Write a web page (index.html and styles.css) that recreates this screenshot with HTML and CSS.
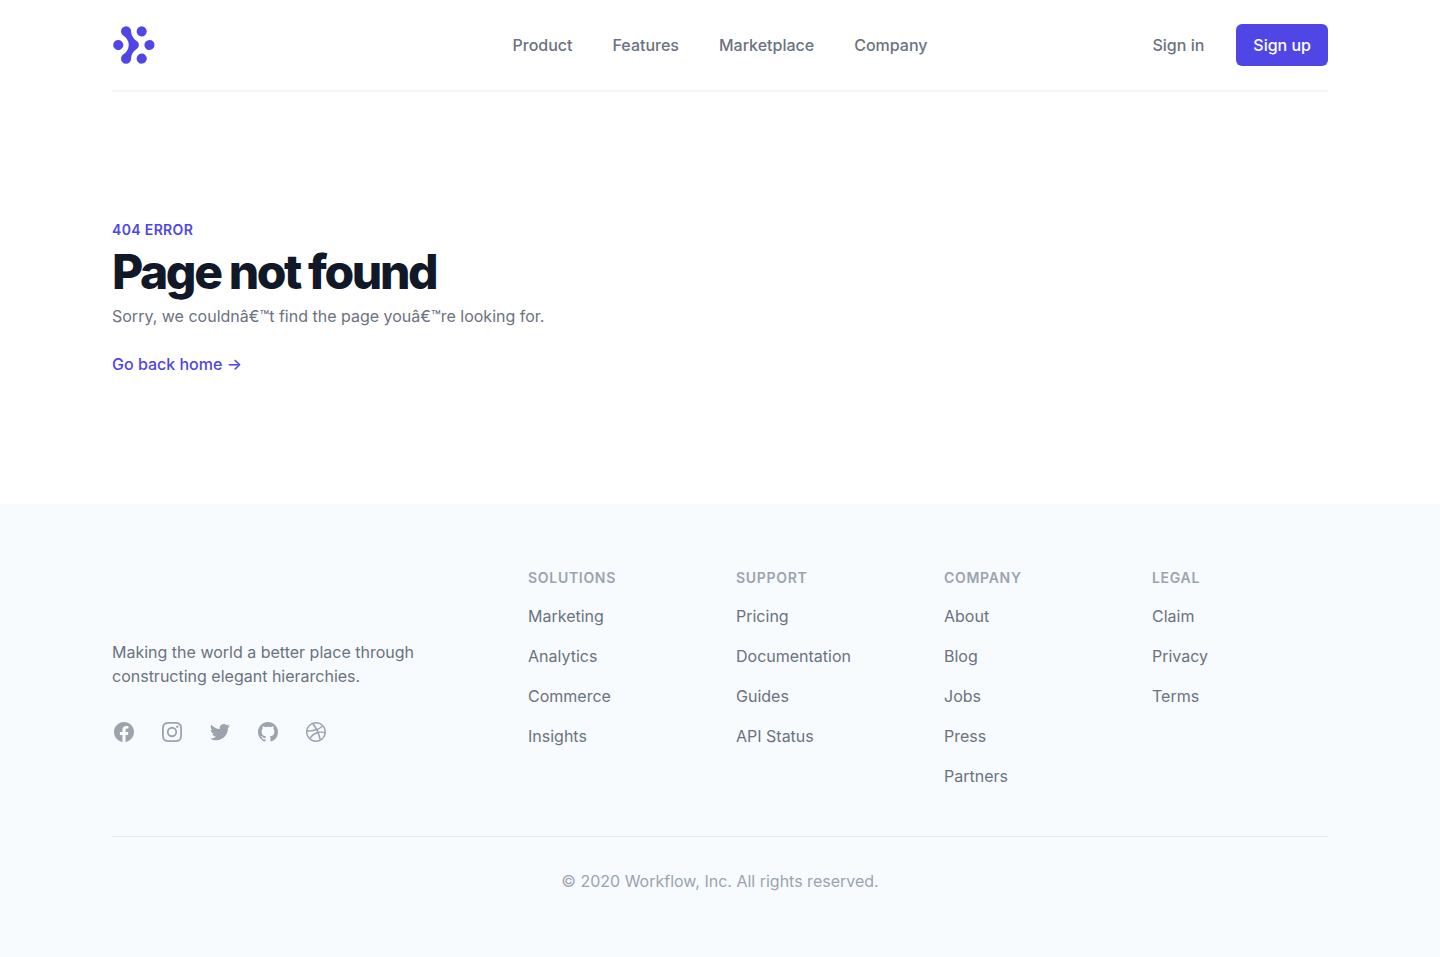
FILE: index.html
```html
<!DOCTYPE html>
<html lang="en">
<head>
<meta charset="utf-8">
<meta name="viewport" content="width=device-width, initial-scale=1">
<title>Page not found</title>
<link rel="stylesheet" href="styles.css">
</head>
<body>
<div class="container">
  <header class="header">
    <a class="logo" href="#" aria-label="Workflow">
      <svg class="logo-mark" viewBox="0 0 35 32" fill="currentColor" aria-hidden="true"><path d="M15.258 26.865a4.043 4.043 0 01-1.133 2.917A4.006 4.006 0 0111.253 31a3.992 3.992 0 01-2.872-1.218 4.028 4.028 0 01-1.133-2.917c.009-.698.2-1.382.557-1.981.356-.6.863-1.094 1.47-1.433-.024.109.09-.055 0 0l1.86-1.652a8.495 8.495 0 002.304-5.793c0-2.926-1.711-5.901-4.17-7.457.094.055-.036-.094 0 0A3.952 3.952 0 017.8 7.116a3.975 3.975 0 01-.557-1.98 4.042 4.042 0 011.133-2.918A4.006 4.006 0 0111.247 1a3.99 3.99 0 012.872 1.218 4.025 4.025 0 011.133 2.917 8.521 8.521 0 002.347 5.832l.817.8c.326.285.668.551 1.024.798.621.33 1.142.826 1.504 1.431a3.902 3.902 0 01-1.504 5.442c.033-.067-.063.036 0 0a8.968 8.968 0 00-3.024 3.183 9.016 9.016 0 00-1.158 4.244zM19.741 5.123c0 .796.235 1.575.676 2.237a4.01 4.01 0 001.798 1.482 3.99 3.99 0 004.366-.873 4.042 4.042 0 00.869-4.386 4.02 4.02 0 00-1.476-1.806 3.994 3.994 0 00-5.058.501 4.038 4.038 0 00-1.175 2.845zM23.748 22.84c-.792 0-1.567.236-2.226.678a4.021 4.021 0 00-1.476 1.806 4.042 4.042 0 00.869 4.387 3.99 3.99 0 004.366.873A4.01 4.01 0 0027.08 29.1a4.039 4.039 0 00-.5-5.082 4 4 0 00-2.832-1.18zM34 15.994c0-.796-.235-1.574-.675-2.236a4.01 4.01 0 00-1.798-1.483 3.99 3.99 0 00-4.367.873 4.042 4.042 0 00-.869 4.387 4.02 4.02 0 001.476 1.806 3.993 3.993 0 002.226.678 4.003 4.003 0 002.832-1.18A4.04 4.04 0 0034 15.993zM5.007 11.969c-.793 0-1.567.236-2.226.678a4.021 4.021 0 00-1.476 1.807 4.042 4.042 0 00.869 4.386 4.001 4.001 0 004.366.873 4.011 4.011 0 001.798-1.483 4.038 4.038 0 00-.5-5.08 4.004 4.004 0 00-2.831-1.181z"/></svg>
    </a>
    <nav class="nav" aria-label="Main">
      <a class="nav-link" href="#">Product</a>
      <a class="nav-link" href="#">Features</a>
      <a class="nav-link" href="#">Marketplace</a>
      <a class="nav-link" href="#">Company</a>
    </nav>
    <div class="account">
      <a class="nav-link" href="#">Sign in</a>
      <a class="button" href="#">Sign up</a>
    </div>
  </header>
  <main class="error">
    <p class="error-code">404 error</p>
    <h1 class="error-title">Page not found</h1>
    <p class="error-text">Sorry, we couldnâ€™t find the page youâ€™re looking for.</p>
    <a class="error-link" href="#">Go back home →</a>
  </main>
</div>
<footer class="footer">
  <div class="container">
    <div class="footer-main">
      <div class="about">
        <p class="about-text">Making the world a better place through constructing elegant hierarchies.</p>
        <div class="social">
          <a class="social-link" href="#" aria-label="Facebook"><svg class="icon" viewBox="0 0 24 24" fill="currentColor" aria-hidden="true"><path fill-rule="evenodd" clip-rule="evenodd" d="M22 12c0-5.523-4.477-10-10-10S2 6.477 2 12c0 4.991 3.657 9.128 8.438 9.878v-6.987h-2.54V12h2.54V9.797c0-2.506 1.492-3.89 3.777-3.89 1.094 0 2.238.195 2.238.195v2.46h-1.26c-1.243 0-1.63.771-1.63 1.562V12h2.773l-.443 2.89h-2.33v6.988C18.343 21.128 22 16.991 22 12z"/></svg></a>
          <a class="social-link" href="#" aria-label="Instagram"><svg class="icon" viewBox="0 0 24 24" fill="currentColor" aria-hidden="true"><path fill-rule="evenodd" clip-rule="evenodd" d="M12.315 2c2.43 0 2.784.013 3.808.06 1.064.049 1.791.218 2.427.465a4.902 4.902 0 011.772 1.153 4.902 4.902 0 011.153 1.772c.247.636.416 1.363.465 2.427.048 1.067.06 1.407.06 4.123v.08c0 2.643-.012 2.987-.06 4.043-.049 1.064-.218 1.791-.465 2.427a4.902 4.902 0 01-1.153 1.772 4.902 4.902 0 01-1.772 1.153c-.636.247-1.363.416-2.427.465-1.067.048-1.407.06-4.123.06h-.08c-2.643 0-2.987-.012-4.043-.06-1.064-.049-1.791-.218-2.427-.465a4.902 4.902 0 01-1.772-1.153 4.902 4.902 0 01-1.153-1.772c-.247-.636-.416-1.363-.465-2.427-.047-1.024-.06-1.379-.06-3.808v-.63c0-2.43.013-2.784.06-3.808.049-1.064.218-1.791.465-2.427a4.902 4.902 0 011.153-1.772A4.902 4.902 0 015.45 2.525c.636-.247 1.363-.416 2.427-.465C8.901 2.013 9.256 2 11.685 2h.63zm-.081 1.802h-.468c-2.456 0-2.784.011-3.807.058-.975.045-1.504.207-1.857.344-.467.182-.8.398-1.15.748-.35.35-.566.683-.748 1.15-.137.353-.3.882-.344 1.857-.047 1.023-.058 1.351-.058 3.807v.468c0 2.456.011 2.784.058 3.807.045.975.207 1.504.344 1.857.182.466.399.8.748 1.15.35.35.683.566 1.15.748.353.137.882.3 1.857.344 1.054.048 1.37.058 4.041.058h.08c2.597 0 2.917-.01 3.96-.058.976-.045 1.505-.207 1.858-.344.466-.182.8-.398 1.15-.748.35-.35.566-.683.748-1.15.137-.353.3-.882.344-1.857.048-1.055.058-1.37.058-4.041v-.08c0-2.597-.01-2.917-.058-3.96-.045-.976-.207-1.505-.344-1.858a3.097 3.097 0 00-.748-1.15 3.098 3.098 0 00-1.15-.748c-.353-.137-.882-.3-1.857-.344-1.023-.047-1.351-.058-3.807-.058zM12 6.865a5.135 5.135 0 110 10.27 5.135 5.135 0 010-10.27zm0 1.802a3.333 3.333 0 100 6.666 3.333 3.333 0 000-6.666zm5.338-3.205a1.2 1.2 0 110 2.4 1.2 1.2 0 010-2.4z"/></svg></a>
          <a class="social-link" href="#" aria-label="Twitter"><svg class="icon" viewBox="0 0 24 24" fill="currentColor" aria-hidden="true"><path d="M8.29 20.251c7.547 0 11.675-6.253 11.675-11.675 0-.178 0-.355-.012-.53A8.348 8.348 0 0022 5.92a8.19 8.19 0 01-2.357.646 4.118 4.118 0 001.804-2.27 8.224 8.224 0 01-2.605.996 4.107 4.107 0 00-6.993 3.743 11.65 11.65 0 01-8.457-4.287 4.106 4.106 0 001.27 5.477A4.072 4.072 0 012.8 9.713v.052a4.105 4.105 0 003.292 4.022 4.095 4.095 0 01-1.853.07 4.108 4.108 0 003.834 2.85A8.233 8.233 0 012 18.407a11.616 11.616 0 006.29 1.84"/></svg></a>
          <a class="social-link" href="#" aria-label="GitHub"><svg class="icon" viewBox="0 0 24 24" fill="currentColor" aria-hidden="true"><path fill-rule="evenodd" clip-rule="evenodd" d="M12 2C6.477 2 2 6.484 2 12.017c0 4.425 2.865 8.18 6.839 9.504.5.092.682-.217.682-.483 0-.237-.008-.868-.013-1.703-2.782.605-3.369-1.343-3.369-1.343-.454-1.158-1.11-1.466-1.11-1.466-.908-.62.069-.608.069-.608 1.003.07 1.531 1.032 1.531 1.032.892 1.53 2.341 1.088 2.91.832.092-.647.35-1.088.636-1.338-2.22-.253-4.555-1.113-4.555-4.951 0-1.093.39-1.988 1.029-2.688-.103-.253-.446-1.272.098-2.65 0 0 .84-.27 2.75 1.026A9.564 9.564 0 0112 6.844c.85.004 1.705.115 2.504.337 1.909-1.296 2.747-1.027 2.747-1.027.546 1.379.202 2.398.1 2.651.64.7 1.028 1.595 1.028 2.688 0 3.848-2.339 4.695-4.566 4.943.359.309.678.92.678 1.855 0 1.338-.012 2.419-.012 2.747 0 .268.18.58.688.482A10.019 10.019 0 0022 12.017C22 6.484 17.522 2 12 2z"/></svg></a>
          <a class="social-link" href="#" aria-label="Dribbble"><svg class="icon" viewBox="0 0 24 24" fill="currentColor" aria-hidden="true"><path fill-rule="evenodd" clip-rule="evenodd" d="M12 2C6.48 2 2 6.48 2 12s4.48 10 10 10c5.51 0 10-4.48 10-10S17.51 2 12 2zm6.605 4.61a8.502 8.502 0 011.93 5.314c-.281-.054-3.101-.629-5.943-.271-.065-.141-.12-.293-.184-.445a25.416 25.416 0 00-.564-1.236c3.145-1.28 4.577-3.124 4.761-3.362zM12 3.475c2.17 0 4.154.813 5.662 2.148-.152.216-1.443 1.941-4.48 3.08-1.399-2.57-2.95-4.675-3.189-5A8.687 8.687 0 0112 3.475zm-3.633.803a53.896 53.896 0 013.167 4.935c-3.992 1.063-7.517 1.04-7.896 1.04a8.581 8.581 0 014.729-5.975zM3.453 12.01v-.26c.37.01 4.512.065 8.775-1.215.25.477.477.965.694 1.453-.109.033-.228.065-.336.098-4.404 1.42-6.747 5.303-6.942 5.629a8.522 8.522 0 01-2.19-5.705zM12 20.547a8.482 8.482 0 01-5.239-1.8c.152-.315 1.888-3.656 6.703-5.337.022-.01.033-.01.054-.022a35.318 35.318 0 011.823 6.475 8.4 8.4 0 01-3.341.684zm4.761-1.465c-.086-.52-.542-3.015-1.659-6.084 2.679-.423 5.022.271 5.314.369a8.468 8.468 0 01-3.655 5.715z"/></svg></a>
        </div>
      </div>
      <nav class="link-groups" aria-label="Footer">
        <section>
          <h2 class="group-title">Solutions</h2>
          <ul class="group-list">
            <li><a class="group-link" href="#">Marketing</a></li>
            <li><a class="group-link" href="#">Analytics</a></li>
            <li><a class="group-link" href="#">Commerce</a></li>
            <li><a class="group-link" href="#">Insights</a></li>
          </ul>
        </section>
        <section>
          <h2 class="group-title">Support</h2>
          <ul class="group-list">
            <li><a class="group-link" href="#">Pricing</a></li>
            <li><a class="group-link" href="#">Documentation</a></li>
            <li><a class="group-link" href="#">Guides</a></li>
            <li><a class="group-link" href="#">API Status</a></li>
          </ul>
        </section>
        <section>
          <h2 class="group-title">Company</h2>
          <ul class="group-list">
            <li><a class="group-link" href="#">About</a></li>
            <li><a class="group-link" href="#">Blog</a></li>
            <li><a class="group-link" href="#">Jobs</a></li>
            <li><a class="group-link" href="#">Press</a></li>
            <li><a class="group-link" href="#">Partners</a></li>
          </ul>
        </section>
        <section>
          <h2 class="group-title">Legal</h2>
          <ul class="group-list">
            <li><a class="group-link" href="#">Claim</a></li>
            <li><a class="group-link" href="#">Privacy</a></li>
            <li><a class="group-link" href="#">Terms</a></li>
          </ul>
        </section>
      </nav>
    </div>
    <p class="copyright">© 2020 Workflow, Inc. All rights reserved.</p>
  </div>
</footer>
</body>
</html>
```
FILE: styles.css
```css
*, *::before, *::after { box-sizing: border-box; }

body {
  margin: 0;
  background: #fff;
  color: #6b7280;
  font-family: Inter, "Liberation Sans", sans-serif;
  font-size: 16px;
  line-height: 24px;
}

h1, h2, p, ul { margin: 0; padding: 0; }
ul { list-style: none; }
a { color: inherit; text-decoration: none; }

.container {
  max-width: 1280px;
  margin: 0 auto;
  padding: 0 32px;
}

.header {
  display: grid;
  grid-template-columns: 1fr auto 1fr;
  align-items: center;
  padding: 24px 0;
  border-bottom: 2px solid #f3f4f6;
}

.logo { justify-self: start; color: #4f46e5; }
.logo-mark { display: block; height: 40px; }

.nav { display: flex; gap: 40px; }
.nav-link { font-weight: 500; }
.nav-link:hover { color: #111827; }

.account {
  display: flex;
  align-items: center;
  justify-content: flex-end;
  gap: 32px;
}

.button {
  padding: 8px 16px;
  border: 1px solid transparent;
  border-radius: 6px;
  background: #4f46e5 border-box;
  color: #fff;
  font-weight: 500;
}
.button:hover { background-color: #4338ca; }

.error { padding: 128px 0; }

.error-code {
  color: #4f46e5;
  font-size: 14px;
  font-weight: 600;
  line-height: 20px;
  letter-spacing: 0.025em;
  text-transform: uppercase;
}

.error-title {
  margin-top: 8px;
  color: #111827;
  font-size: 48px;
  font-weight: 800;
  line-height: 48px;
  letter-spacing: -0.05em;
}

.error-text { margin-top: 8px; }

.error-link {
  display: inline-block;
  margin-top: 24px;
  color: #4f46e5;
  font-weight: 500;
  vertical-align: top;
}

.footer {
  padding: 64px 0;
  background: #f7fbfd;
}

.footer-main {
  display: grid;
  grid-template-columns: repeat(3, 1fr);
  gap: 32px;
}

.about { padding-top: 72px; }
.about-text { max-width: 320px; }

.social {
  display: flex;
  gap: 24px;
  margin-top: 32px;
  color: #9ca3af;
}
.social-link:hover { color: #6b7280; }
.icon { display: block; width: 24px; height: 24px; }

.link-groups {
  display: grid;
  grid-column: span 2;
  grid-template-columns: repeat(4, 1fr);
  gap: 32px;
}

.group-title {
  color: #9ca3af;
  font-size: 14px;
  font-weight: 600;
  line-height: 20px;
  letter-spacing: 0.05em;
  text-transform: uppercase;
}

.group-list {
  display: grid;
  gap: 16px;
  margin-top: 16px;
}
.group-link:hover { color: #111827; }

.copyright {
  margin-top: 48px;
  padding-top: 32px;
  border-top: 1px solid #e5e7eb;
  color: #9ca3af;
  text-align: center;
}
```
